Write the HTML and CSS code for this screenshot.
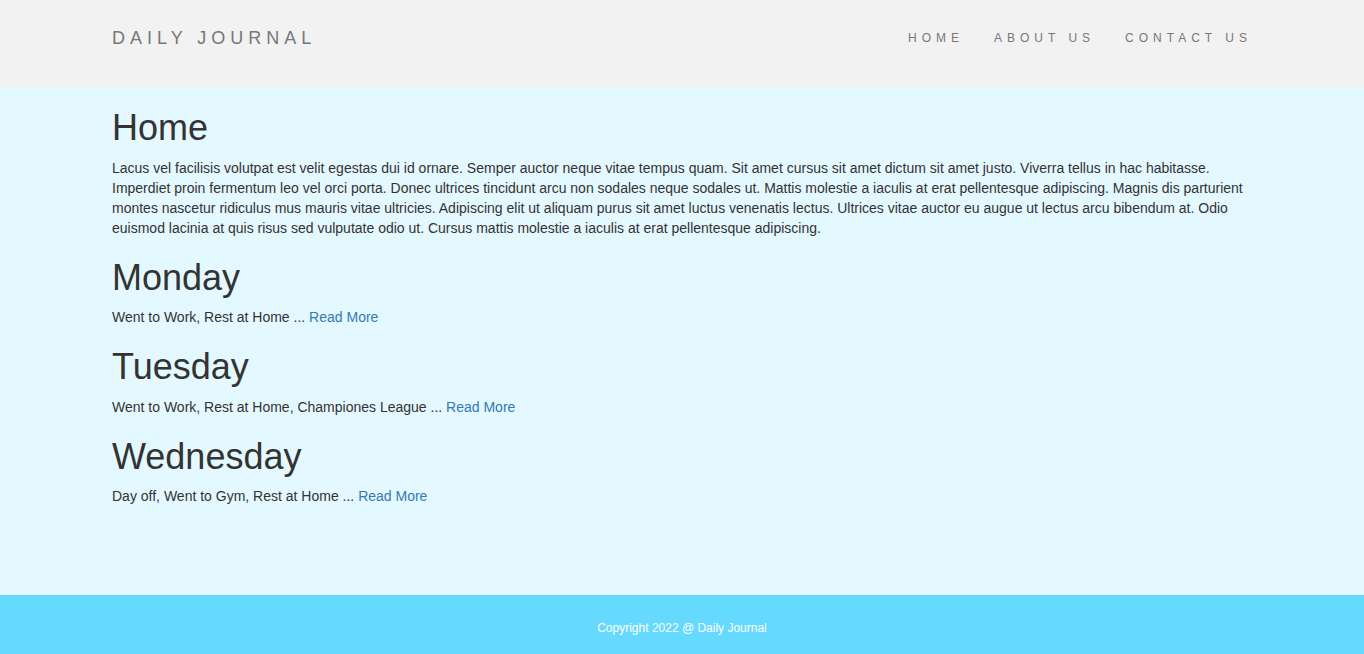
FILE: index.html
```html
<!DOCTYPE html>
<html lang="en">
<head>
<meta charset="utf-8">
<title>Daily Journal</title>
<link rel="stylesheet" href="styles.css">
</head>
<body>
<header class="site-header">
  <div class="container header-inner">
    <a class="brand" href="#">DAILY JOURNAL</a>
    <nav class="nav">
      <a href="#">HOME</a>
      <a href="#">ABOUT US</a>
      <a href="#">CONTACT US</a>
    </nav>
  </div>
</header>
<main class="site-main">
  <div class="container">
    <h1>Home</h1>
    <p>Lacus vel facilisis volutpat est velit egestas dui id ornare. Semper auctor neque vitae tempus quam. Sit amet cursus sit amet dictum sit amet justo. Viverra tellus in hac habitasse. Imperdiet proin fermentum leo vel orci porta. Donec ultrices tincidunt arcu non sodales neque sodales ut. Mattis molestie a iaculis at erat pellentesque adipiscing. Magnis dis parturient montes nascetur ridiculus mus mauris vitae ultricies. Adipiscing elit ut aliquam purus sit amet luctus venenatis lectus. Ultrices vitae auctor eu augue ut lectus arcu bibendum at. Odio euismod lacinia at quis risus sed vulputate odio ut. Cursus mattis molestie a iaculis at erat pellentesque adipiscing.</p>
    <h1>Monday</h1>
    <p>Went to Work, Rest at Home ... <a href="#">Read More</a></p>
    <h1>Tuesday</h1>
    <p>Went to Work, Rest at Home, Championes League ... <a href="#">Read More</a></p>
    <h1>Wednesday</h1>
    <p>Day off, Went to Gym, Rest at Home ... <a href="#">Read More</a></p>
  </div>
</main>
<footer class="site-footer">
  <p>Copyright 2022 @ Daily Journal</p>
</footer>
</body>
</html>
```
FILE: styles.css
```css
* { box-sizing: border-box; }
html, body { margin: 0; padding: 0; }
body {
  font-family: "Liberation Sans", Arial, Helvetica, sans-serif;
  font-size: 14px;
  line-height: 20px;
  color: #333;
  background: #e4f8ff;
}
a { text-decoration: none; }
.container {
  width: 1170px;
  margin: 0 auto;
  padding: 0 15px;
}
.site-header {
  background: #f2f2f2;
  height: 87px;
  padding-top: 28px;
}
.header-inner {
  display: flex;
  justify-content: space-between;
  align-items: center;
}
.brand {
  font-size: 18px;
  line-height: 20px;
  letter-spacing: 5px;
  color: #777;
}
.nav {
  display: flex;
  margin-right: -15px;
}
.nav a {
  font-size: 12px;
  line-height: 20px;
  letter-spacing: 5px;
  color: #777;
  padding: 0 15px;
}
.site-main {
  background: #e4f8ff;
  min-height: 508px;
  padding-top: 1px;
}
.site-main h1 {
  font-size: 36px;
  font-weight: 500;
  line-height: 1.1;
  margin: 20px 0 10px;
}
.site-main p { margin: 0 0 10px; }
.site-main a { color: #337ab7; }
.site-footer {
  background: #66d9ff;
  height: 59px;
  padding-top: 23px;
  text-align: center;
}
.site-footer p {
  margin: 0;
  font-size: 12px;
  line-height: 20px;
  color: #fff;
}
```
